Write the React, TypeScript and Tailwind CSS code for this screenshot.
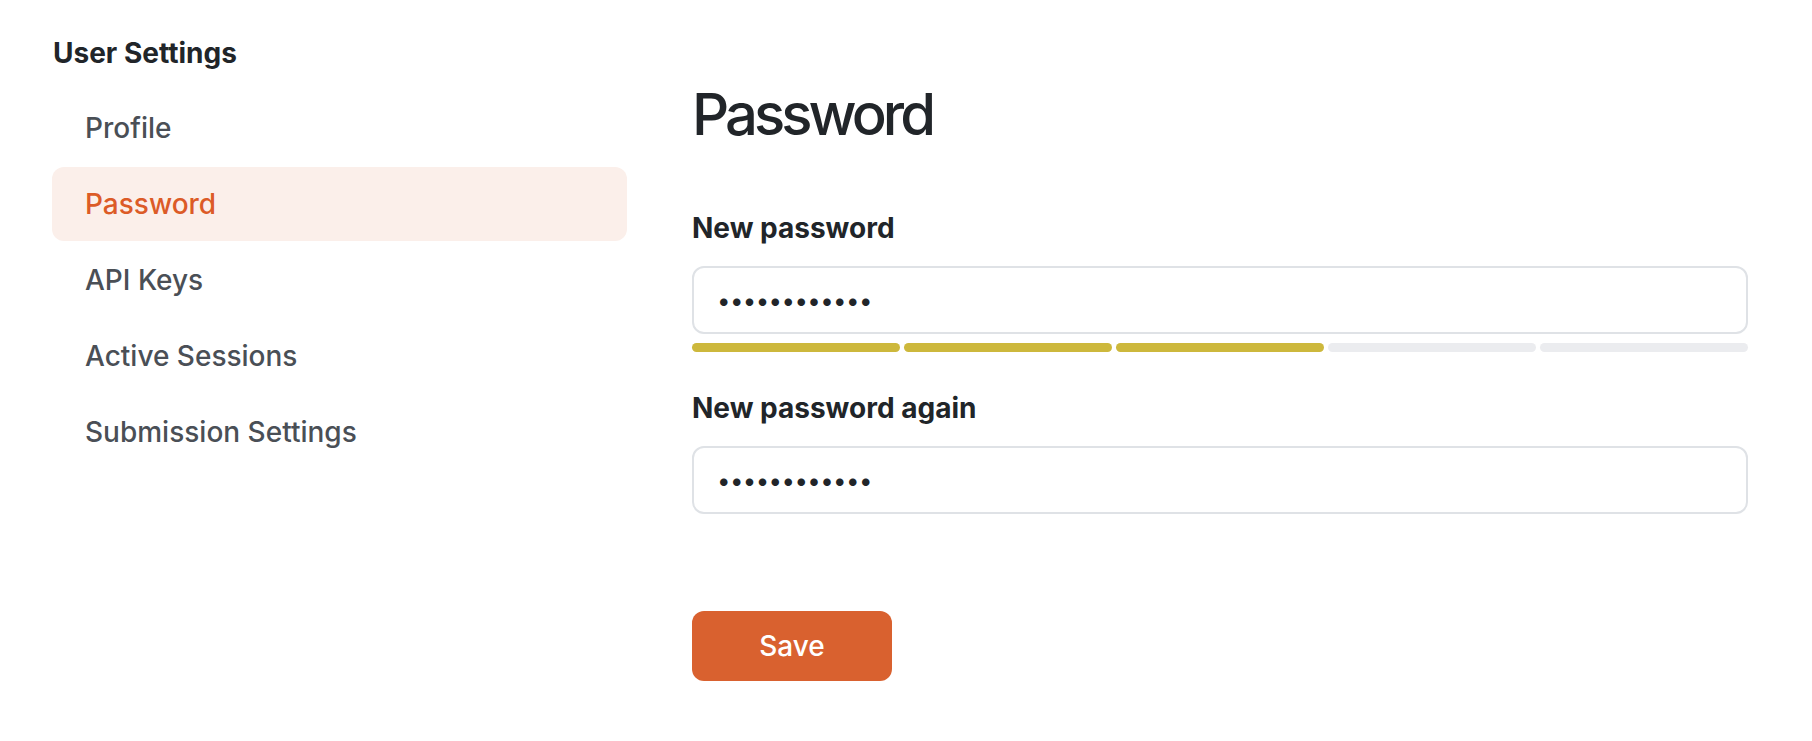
import { useState } from "react";

const navItems = [
	{ id: "profile", label: "Profile" },
	{ id: "password", label: "Password" },
	{ id: "api-keys", label: "API Keys" },
	{ id: "sessions", label: "Active Sessions" },
	{ id: "submission", label: "Submission Settings" },
];

function StrengthMeter({ score }: { score: number }) {
	return (
		<div className="mt-[9px] flex gap-[4px]">
			{[0, 1, 2, 3, 4].map((i) => (
				<div
					key={i}
					className={`h-[9px] flex-1 rounded-full ${i < score ? "bg-[#cdb83c]" : "bg-[#ebecef]"}`}
				/>
			))}
		</div>
	);
}

export default function App() {
	const [tab, setTab] = useState("password");
	const [pw, setPw] = useState("correcthorse");
	const [pw2, setPw2] = useState("correcthorse");

	return (
		<div className="flex min-h-screen gap-[65px] bg-white pl-[52px] font-['Inter',sans-serif] text-[#212529]">
			<aside className="w-[575px] shrink-0 pt-[33px]">
				<h2 className="pl-px text-[28px] leading-[40px] font-bold">User Settings</h2>
				<nav className="mt-[18px] flex flex-col gap-[2px]">
					{navItems.map(({ id, label }) => (
						<button
							key={id}
							type="button"
							onClick={() => setTab(id)}
							className={`flex h-[74px] items-center rounded-[12px] px-[33px] text-left text-[28px] font-medium ${
								id === tab ? "bg-[#fbefea] text-[#dc5b27]" : "text-[#4a4f56]"
							}`}
						>
							{label}
						</button>
					))}
				</nav>
			</aside>

			<main className="w-[1056px] pt-[78px]">
				<h1 className="text-[58px] leading-[72px] font-medium tracking-[-0.068em]">Password</h1>

				<label className="mt-[58px] block text-[28px] leading-[40px] font-bold" htmlFor="pw">
					New password
				</label>
				<input
					id="pw"
					type="password"
					value={pw}
					onChange={(e) => setPw(e.target.value)}
					className="mt-[18px] block h-[68px] w-full rounded-[12px] border-2 border-[#dfe2e6] px-[23px] text-[24px] tracking-[-0.6px] text-[#212529] outline-none"
				/>
				<StrengthMeter score={3} />

				<label className="mt-[36px] block text-[28px] leading-[40px] font-bold" htmlFor="pw2">
					New password again
				</label>
				<input
					id="pw2"
					type="password"
					value={pw2}
					onChange={(e) => setPw2(e.target.value)}
					className="mt-[18px] block h-[68px] w-full rounded-[12px] border-2 border-[#dfe2e6] px-[23px] text-[24px] tracking-[-0.6px] text-[#212529] outline-none"
				/>

				<button
					type="button"
					className="mt-[97px] h-[70px] w-[200px] rounded-[12px] bg-[#d9612f] text-[28px] font-medium text-white"
				>
					Save
				</button>
			</main>
		</div>
	);
}
